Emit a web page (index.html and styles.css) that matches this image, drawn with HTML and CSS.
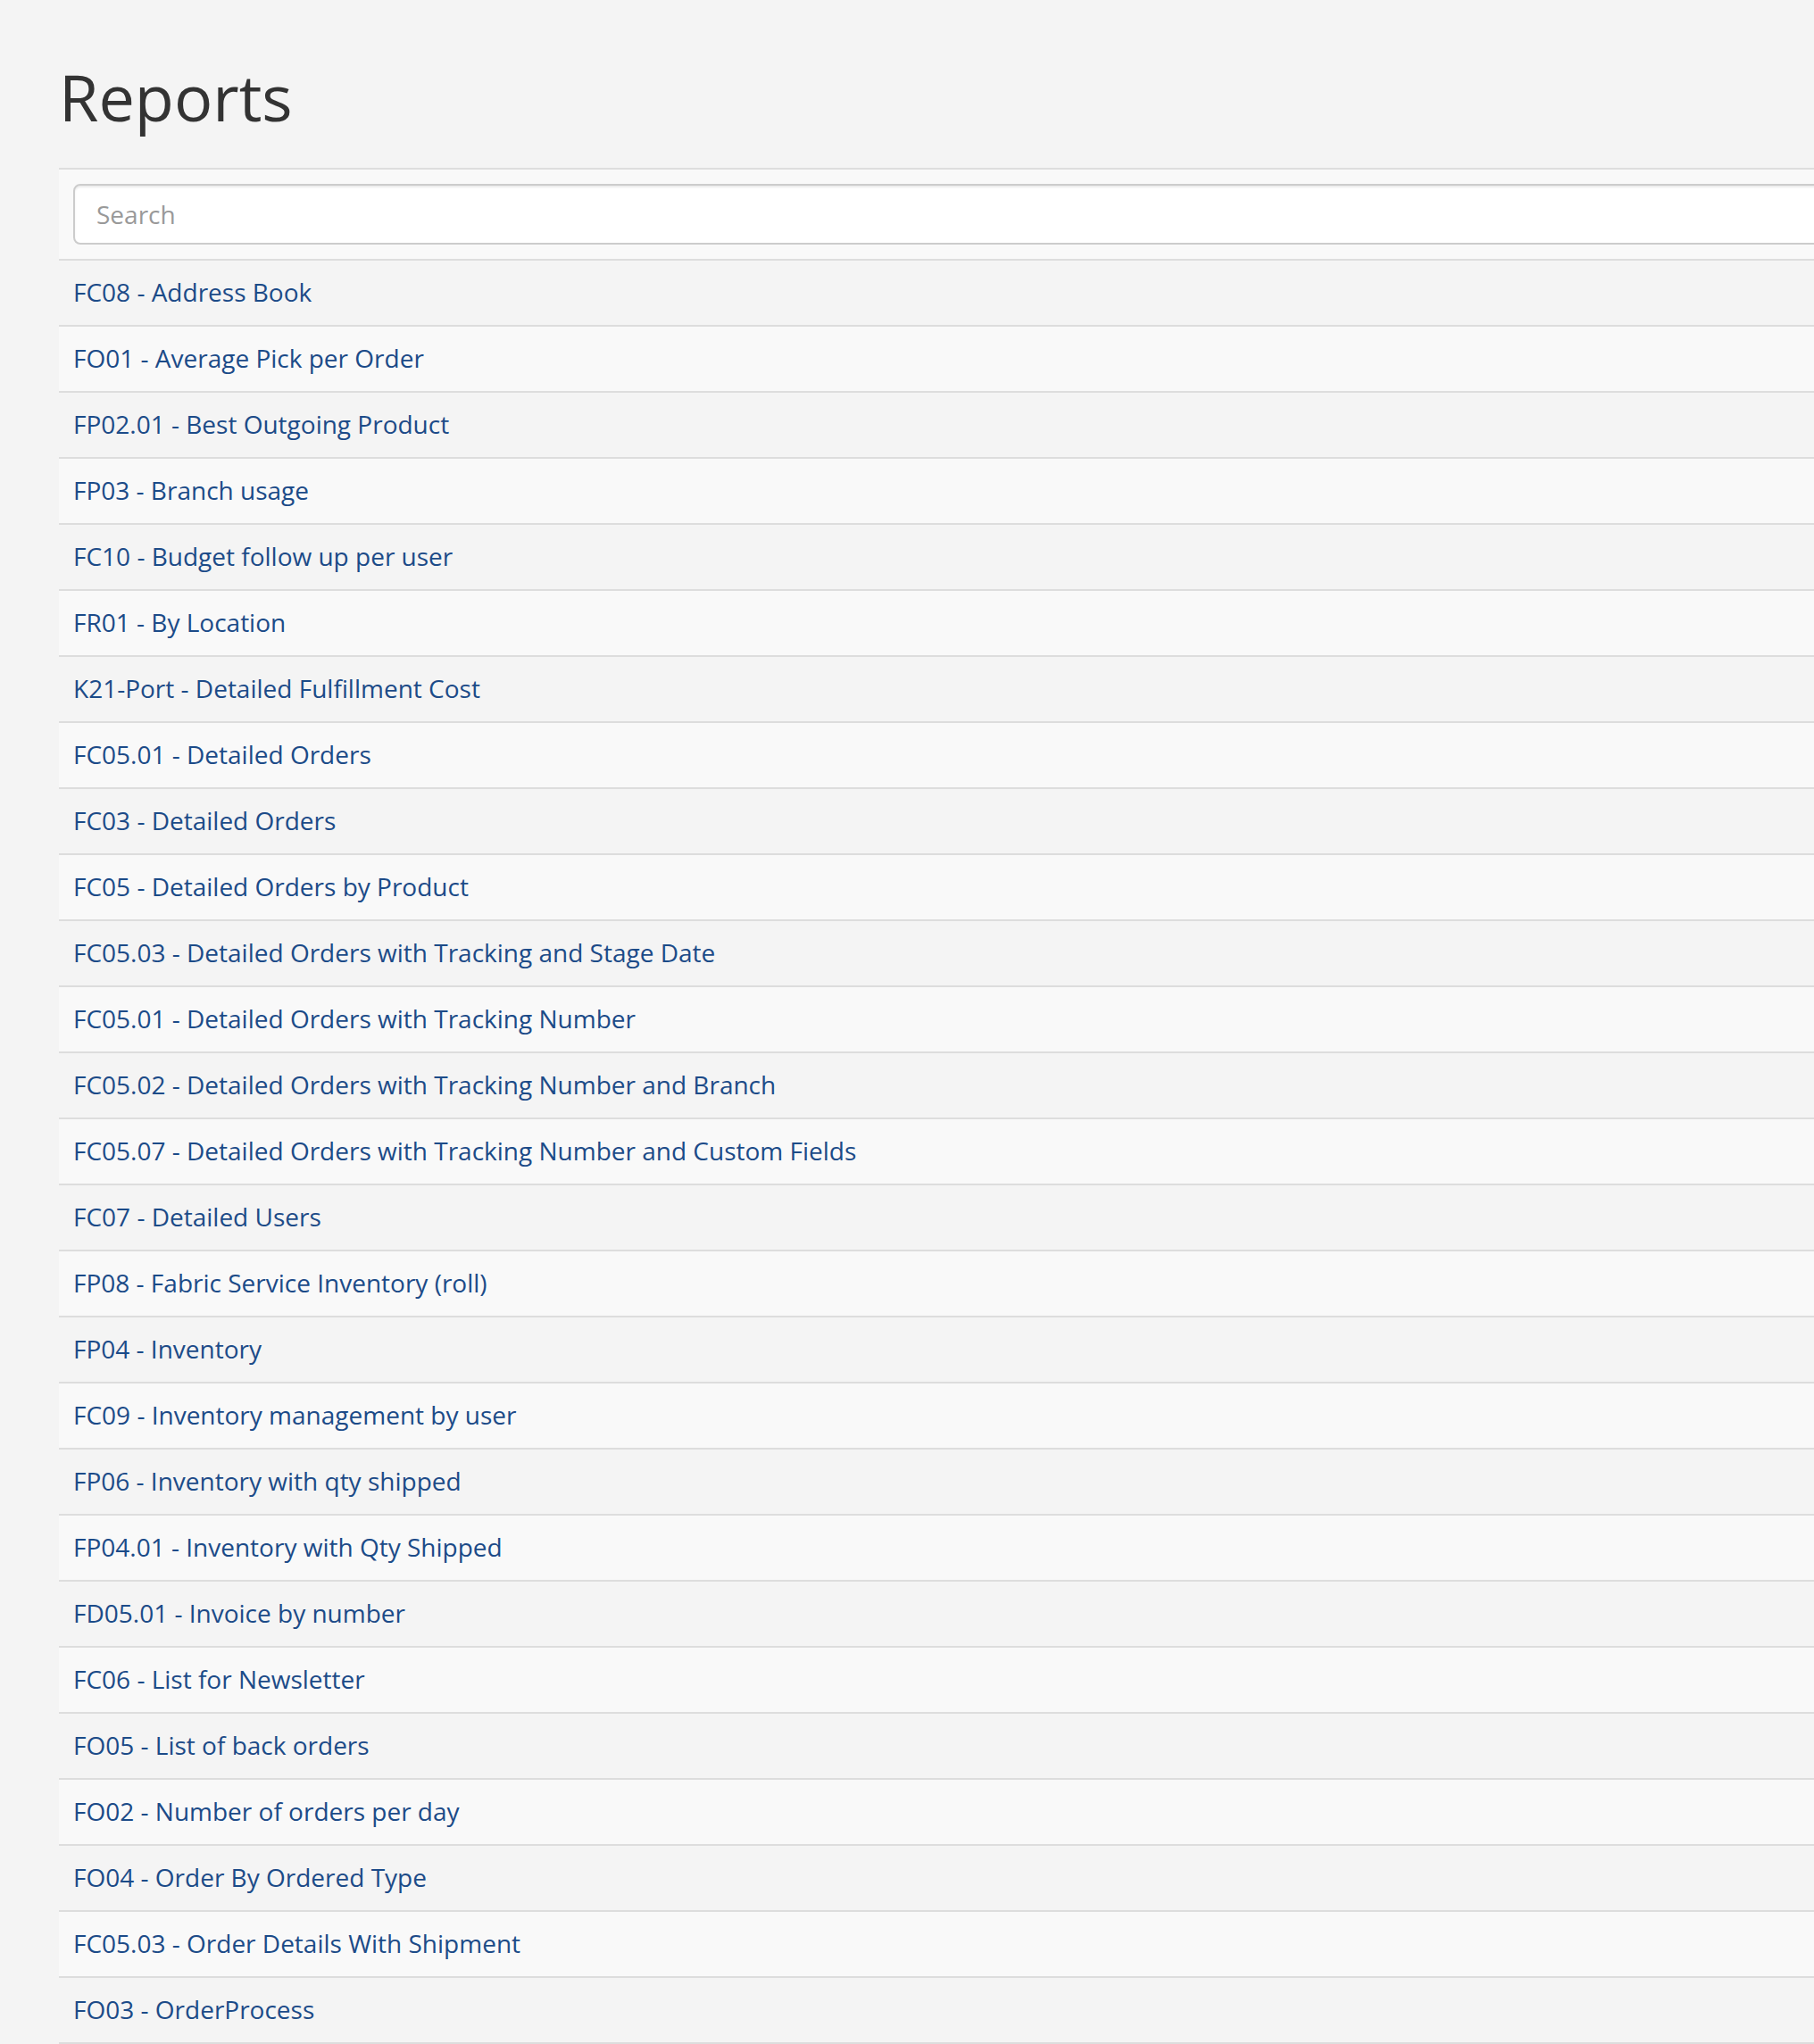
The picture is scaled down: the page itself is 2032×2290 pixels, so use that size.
FILE: index.html
```html
<!DOCTYPE html>
<html>

<head>
    <title>Reports</title>
    <meta charset="utf-8">
    <meta name="viewport" content="width=device-width, initial-scale=1">
    <link rel="stylesheet" href="styles.css">
</head>

<body>
<div class="page">
    <h1 class="title">Reports</h1>

    <div class="table-wrap">
        <table class="report-table">
            <tbody>
            <tr>
                <td class="search-cell"><input class="search" type="text" placeholder="Search"></td>
            </tr>
            <tr><td><a href="#">FC08 - Address Book</a></td></tr>
            <tr><td><a href="#">FO01 - Average Pick per Order</a></td></tr>
            <tr><td><a href="#">FP02.01 - Best Outgoing Product</a></td></tr>
            <tr><td><a href="#">FP03 - Branch usage</a></td></tr>
            <tr><td><a href="#">FC10 - Budget follow up per user</a></td></tr>
            <tr><td><a href="#">FR01 - By Location</a></td></tr>
            <tr><td><a href="#">K21-Port - Detailed Fulfillment Cost</a></td></tr>
            <tr><td><a href="#">FC05.01 - Detailed Orders</a></td></tr>
            <tr><td><a href="#">FC03 - Detailed Orders</a></td></tr>
            <tr><td><a href="#">FC05 - Detailed Orders by Product</a></td></tr>
            <tr><td><a href="#">FC05.03 - Detailed Orders with Tracking and Stage Date</a></td></tr>
            <tr><td><a href="#">FC05.01 - Detailed Orders with Tracking Number</a></td></tr>
            <tr><td><a href="#">FC05.02 - Detailed Orders with Tracking Number and Branch</a></td></tr>
            <tr><td><a href="#">FC05.07 - Detailed Orders with Tracking Number and Custom Fields</a></td></tr>
            <tr><td><a href="#">FC07 - Detailed Users</a></td></tr>
            <tr><td><a href="#">FP08 - Fabric Service Inventory (roll)</a></td></tr>
            <tr><td><a href="#">FP04 - Inventory</a></td></tr>
            <tr><td><a href="#">FC09 - Inventory management by user</a></td></tr>
            <tr><td><a href="#">FP06 - Inventory with qty shipped</a></td></tr>
            <tr><td><a href="#">FP04.01 - Inventory with Qty Shipped</a></td></tr>
            <tr><td><a href="#">FD05.01 - Invoice by number</a></td></tr>
            <tr><td><a href="#">FC06 - List for Newsletter</a></td></tr>
            <tr><td><a href="#">FO05 - List of back orders</a></td></tr>
            <tr><td><a href="#">FO02 - Number of orders per day</a></td></tr>
            <tr><td><a href="#">FO04 - Order By Ordered Type</a></td></tr>
            <tr><td><a href="#">FC05.03 - Order Details With Shipment</a></td></tr>
            <tr><td><a href="#">FO03 - OrderProcess</a></td></tr>
            </tbody>
        </table>
    </div>
</div>
</body>

</html>
```

FILE: styles.css
```css
html,
body {
    overflow: hidden;
}

body {
    margin: 0;
    background-color: #f4f4f4;
    font-family: "Open Sans", "Liberation Sans", sans-serif;
    font-size: 28px;
    line-height: 40px;
    color: #333;
}

.page {
    padding-left: 66px;
}

.title {
    margin: 69px 0 40px;
    font-size: 72px;
    line-height: 1.1;
    font-weight: 400;
    color: #333;
}

/* table runs past the right edge of the window, as on the original page */
.table-wrap {
    overflow: hidden;
}

.report-table {
    width: calc(100% + 40px);
    border-collapse: collapse;
    border-bottom: 2px solid #ddd;
}

.report-table td {
    padding: 15px 16px 17px;
    border-top: 2px solid #ddd;
}

.report-table td.search-cell {
    padding: 16px;
}

.report-table tr:nth-child(odd) {
    background-color: #f9f9f9;
}

.report-table a {
    color: #1c4b88;
    text-decoration: none;
}

.search {
    display: block;
    width: 100%;
    height: 68px;
    box-sizing: border-box;
    padding: 12px 24px;
    border: 2px solid #ccc;
    border-radius: 8px;
    background-color: white;
    box-shadow: inset 0 2px 2px rgba(0, 0, 0, 0.075);
    font-family: inherit;
    font-size: 28px;
    color: #555;
}

.search::placeholder {
    color: #999;
}
```
